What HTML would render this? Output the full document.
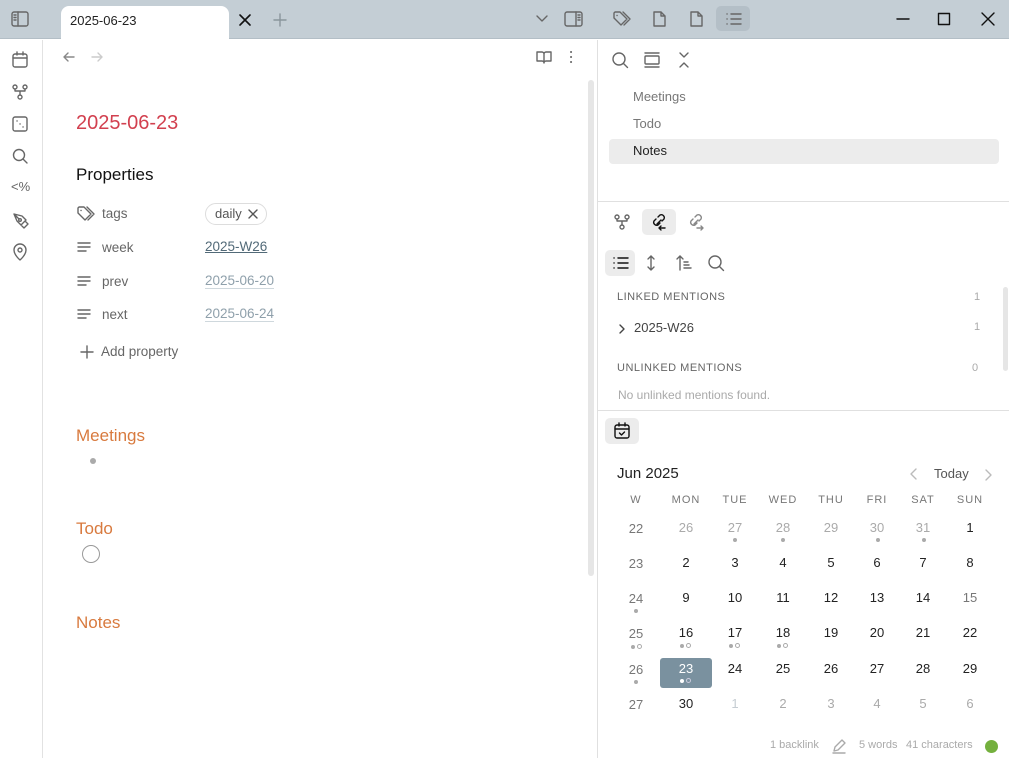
<!DOCTYPE html>
<html><head><meta charset="utf-8"><style>
*{margin:0;padding:0;box-sizing:border-box}
body{width:1009px;height:758px;overflow:hidden;background:#fff;font-family:"Liberation Sans",sans-serif;position:relative;color:#222}
.a{position:absolute;white-space:nowrap;line-height:1}
svg{position:absolute;fill:none;stroke:#666;stroke-width:1.4;stroke-linecap:round;stroke-linejoin:round}
.cal{position:absolute;font-size:13px;text-align:center;width:40px;line-height:1}
.g{color:#aaa}.w{color:#777}
.d{position:absolute;width:4px;height:4px;border-radius:50%;background:#aaa}
.o{position:absolute;width:5px;height:5px;border-radius:50%;border:1px solid #aaa}
</style></head><body>
<!-- top bar -->
<div class="a" style="left:0;top:0;width:1009px;height:39px;background:#c4ced5;border-bottom:1px solid #b3bec6"></div>
<div class="a" style="left:61px;top:6px;width:168px;height:34px;background:#fff;border-radius:8px 8px 0 0"></div>
<div class="a" style="left:70px;top:14px;font-size:13px;color:#222">2025-06-23</div>
<svg style="left:238px;top:13px" width="14" height="14" viewBox="0 0 14 14"><path d="M2 2l10 10M12 2L2 12" stroke="#111" stroke-width="1.6"/></svg>
<svg style="left:272px;top:12px" width="16" height="16" viewBox="0 0 16 16"><path d="M8 2v12M2 8h12" stroke="#8a959c"/></svg>
<svg style="left:11px;top:11px" width="18" height="16" viewBox="0 0 18 16"><rect x="1" y="1" width="16" height="14" rx="2"/><path d="M7 1v14M3 4h2M3 6.5h2M3 9h2"/></svg>
<svg style="left:535px;top:14px" width="14" height="10" viewBox="0 0 14 10"><path d="M2 2l5 5 5-5"/></svg>
<svg style="left:564px;top:11px" width="19" height="16" viewBox="0 0 19 16"><rect x="1" y="1" width="17" height="14" rx="2"/><path d="M12 1v14M14 4h2M14 6.5h2M14 9h2"/></svg>
<!-- right header icons -->
<svg style="left:612px;top:10px" width="20" height="18" viewBox="0 0 20 18"><path d="M2 3v5l7 7 6-6-7-7H3zM5 5.5h.1M11 2l7 7-6 6"/></svg>
<svg style="left:652px;top:10px" width="14" height="18" viewBox="0 0 14 18"><path d="M2 2h7l4 4v10H2zM9 2v4h4"/></svg>
<svg style="left:689px;top:10px" width="14" height="18" viewBox="0 0 14 18"><path d="M2 2h7l4 4v10H2zM9 2v4h4"/></svg>
<div class="a" style="left:716px;top:6px;width:34px;height:25px;background:#b4bfc7;border-radius:5px"></div>
<svg style="left:725px;top:12px" width="18" height="14" viewBox="0 0 18 14"><path d="M2 2h.1M2 7h.1M2 12h.1M6 2h10M6 7h10M6 12h10"/></svg>
<svg style="left:895px;top:12px" width="16" height="14" viewBox="0 0 16 14"><path d="M2 7h12" stroke="#111"/></svg>
<svg style="left:936px;top:11px" width="16" height="16" viewBox="0 0 16 16"><rect x="2.5" y="2.5" width="11" height="11" stroke="#111"/></svg>
<svg style="left:980px;top:11px" width="16" height="16" viewBox="0 0 16 16"><path d="M2 2l12 12M14 2L2 14" stroke="#111"/></svg>
<!-- left ribbon -->
<div class="a" style="left:42px;top:40px;width:1px;height:718px;background:#e2e2e2"></div>
<svg style="left:11px;top:51px" width="18" height="18" viewBox="0 0 18 18"><rect x="2" y="3" width="14" height="13" rx="2"/><path d="M2 7h14M6 1v3M12 1v3"/></svg>
<svg style="left:11px;top:83px" width="18" height="18" viewBox="0 0 18 18"><circle cx="4" cy="4" r="2"/><circle cx="14" cy="4" r="2"/><circle cx="9" cy="14" r="2"/><path d="M4 6v2h10V6M9 8v4"/></svg>
<svg style="left:11px;top:115px" width="18" height="18" viewBox="0 0 18 18"><rect x="2" y="2" width="14" height="14" rx="2"/><path d="M6 6h.1M9 9h.1M12 12h.1"/></svg>
<svg style="left:11px;top:147px" width="18" height="18" viewBox="0 0 18 18"><circle cx="8" cy="8" r="5.5"/><path d="M12 12l4 4"/></svg>
<div class="a" style="left:11px;top:180px;font-size:13px;color:#666">&lt;%</div>
<svg style="left:11px;top:211px" width="18" height="18" viewBox="0 0 18 18"><path d="M3 3l8 2 4 4-5 5-4-4zM3 3l5 5M10 14l3 3 4-4-3-3"/><circle cx="9" cy="9" r="1.3"/></svg>
<svg style="left:11px;top:243px" width="18" height="18" viewBox="0 0 18 18"><path d="M9 17s6-5 6-10A6 6 0 003 7c0 5 6 10 6 10z"/><circle cx="9" cy="7" r="2"/></svg>
<!-- main nav -->
<svg style="left:62px;top:50px" width="14" height="14" viewBox="0 0 14 14"><path d="M12 7H2M6 3L2 7l4 4" stroke="#888"/></svg>
<svg style="left:90px;top:50px" width="14" height="14" viewBox="0 0 14 14"><path d="M2 7h10M8 3l4 4-4 4" stroke="#ccc"/></svg>
<svg style="left:535px;top:49px" width="18" height="16" viewBox="0 0 18 16"><path d="M2 3h5a2 2 0 012 2v9a2 2 0 00-2-2H2zM16 3h-5a2 2 0 00-2 2v9a2 2 0 012-2h5z"/></svg>
<svg style="left:564px;top:49px" width="14" height="16" viewBox="0 0 14 16"><path d="M7 3h.1M7 8h.1M7 13h.1" stroke-width="2"/></svg>
<div class="a" style="left:588px;top:80px;width:6px;height:496px;background:#e6e6e6;border-radius:3px"></div>
<div class="a" style="left:597px;top:40px;width:1px;height:718px;background:#e0e0e0"></div>
<!-- content -->
<div class="a" style="left:76px;top:113px;font-size:20px;color:#d2404f">2025-06-23</div>
<div class="a" style="left:76px;top:166px;font-size:17px;color:#111">Properties</div>
<svg style="left:76px;top:205px" width="20" height="18" viewBox="0 0 20 18"><path d="M2 3v5l7 7 6-6-7-7H3zM5 5.5h.1M11 2l7 7-6 6"/></svg>
<div class="a" style="left:102px;top:207px;font-size:13.5px;color:#666">tags</div>
<div class="a" style="left:205px;top:203px;width:62px;height:22px;border:1px solid #ddd;border-radius:11px"></div>
<div class="a" style="left:215px;top:207px;font-size:13px;color:#555">daily</div>
<svg style="left:247px;top:208px" width="12" height="12" viewBox="0 0 12 12"><path d="M2 2l8 8M10 2l-8 8" stroke="#555"/></svg>
<svg style="left:76px;top:240px" width="16" height="14" viewBox="0 0 16 14"><path d="M2 3h12M2 7h12M2 11h8"/></svg>
<div class="a" style="left:102px;top:241px;font-size:13.5px;color:#666">week</div>
<div class="a" style="left:205px;top:240px;font-size:13.5px;color:#526a78;text-decoration:underline">2025-W26</div>
<svg style="left:76px;top:274px" width="16" height="14" viewBox="0 0 16 14"><path d="M2 3h12M2 7h12M2 11h8"/></svg>
<div class="a" style="left:102px;top:275px;font-size:13.5px;color:#666">prev</div>
<div class="a" style="left:205px;top:274px;font-size:13.5px;color:#8fa0ab;border-bottom:1px solid #cfd8dd">2025-06-20</div>
<svg style="left:76px;top:307px" width="16" height="14" viewBox="0 0 16 14"><path d="M2 3h12M2 7h12M2 11h8"/></svg>
<div class="a" style="left:102px;top:308px;font-size:13.5px;color:#666">next</div>
<div class="a" style="left:205px;top:307px;font-size:13.5px;color:#8fa0ab;border-bottom:1px solid #cfd8dd">2025-06-24</div>
<svg style="left:80px;top:345px" width="14" height="14" viewBox="0 0 14 14"><path d="M7 1v12M1 7h12"/></svg>
<div class="a" style="left:101px;top:345px;font-size:13.5px;color:#666">Add property</div>
<div class="a" style="left:76px;top:427px;font-size:17px;color:#d87a3e">Meetings</div>
<div class="a" style="left:90px;top:458px;width:6px;height:6px;border-radius:50%;background:#aaa"></div>
<div class="a" style="left:76px;top:520px;font-size:17px;color:#d87a3e">Todo</div>
<div class="a" style="left:82px;top:545px;width:18px;height:18px;border-radius:50%;border:1px solid #999"></div>
<div class="a" style="left:76px;top:614px;font-size:17px;color:#d87a3e">Notes</div>
<!-- outline pane -->
<svg style="left:611px;top:51px" width="18" height="18" viewBox="0 0 18 18"><circle cx="8" cy="8" r="6"/><path d="M12.5 12.5l4 4"/></svg>
<svg style="left:643px;top:51px" width="18" height="18" viewBox="0 0 18 18"><path d="M2 2h14M2 16h14"/><rect x="2" y="5" width="14" height="8" rx="1"/></svg>
<svg style="left:676px;top:51px" width="16" height="18" viewBox="0 0 16 18"><path d="M4 2l4 4 4-4M4 16l4-4 4 4"/></svg>
<div class="a" style="left:633px;top:90px;font-size:13px;color:#777">Meetings</div>
<div class="a" style="left:633px;top:117px;font-size:13px;color:#777">Todo</div>
<div class="a" style="left:609px;top:139px;width:390px;height:25px;background:#ececec;border-radius:4px"></div>
<div class="a" style="left:633px;top:144px;font-size:13px;color:#222">Notes</div>
<div class="a" style="left:598px;top:201px;width:411px;height:1px;background:#e0e0e0"></div>
<!-- backlinks pane -->
<svg style="left:613px;top:213px" width="18" height="18" viewBox="0 0 18 18"><circle cx="4" cy="4" r="2"/><circle cx="14" cy="4" r="2"/><circle cx="9" cy="14" r="2"/><path d="M4 6v2h10V6M9 8v4"/></svg>
<div class="a" style="left:642px;top:209px;width:34px;height:26px;background:#ececec;border-radius:5px"></div>
<svg style="left:650px;top:213px" width="18" height="18" viewBox="0 0 18 18"><path d="M8 4l2-2a3 3 0 014 4l-2 2M10 10l-2 2a3 3 0 01-4-4l2-2M7 11l4-4M11 13l-2 2 2 2M9 15h6" stroke="#111"/></svg>
<svg style="left:687px;top:213px" width="18" height="18" viewBox="0 0 18 18"><path d="M8 4l2-2a3 3 0 014 4l-2 2M10 10l-2 2a3 3 0 01-4-4l2-2M7 11l4-4M14 13l2 2-2 2M10 15h6" stroke="#888"/></svg>
<div class="a" style="left:605px;top:250px;width:30px;height:26px;background:#ececec;border-radius:5px"></div>
<svg style="left:612px;top:256px" width="18" height="14" viewBox="0 0 18 14"><path d="M2 2h.1M2 7h.1M2 12h.1M6 2h10M6 7h10M6 12h10" stroke="#111"/></svg>
<svg style="left:644px;top:254px" width="14" height="18" viewBox="0 0 14 18"><path d="M7 2v14M4 5l3-3 3 3M4 13l3 3 3-3"/></svg>
<svg style="left:675px;top:254px" width="18" height="18" viewBox="0 0 18 18"><path d="M5 16V2M2 5l3-3 3 3M9 8h4M9 11h5M9 14h7"/></svg>
<svg style="left:707px;top:254px" width="18" height="18" viewBox="0 0 18 18"><circle cx="8" cy="8" r="6"/><path d="M12.5 12.5l4 4"/></svg>
<div class="a" style="left:617px;top:292px;font-size:11px;color:#666;letter-spacing:.5px">LINKED MENTIONS</div>
<div class="a" style="left:974px;top:292px;font-size:11px;color:#aaa">1</div>
<svg style="left:617px;top:323px" width="10" height="12" viewBox="0 0 10 12"><path d="M3 2l4 4-4 4" stroke="#444"/></svg>
<div class="a" style="left:634px;top:321px;font-size:13px;color:#444">2025-W26</div>
<div class="a" style="left:974px;top:322px;font-size:11px;color:#aaa">1</div>
<div class="a" style="left:617px;top:363px;font-size:11px;color:#666;letter-spacing:.5px">UNLINKED MENTIONS</div>
<div class="a" style="left:972px;top:363px;font-size:11px;color:#aaa">0</div>
<div class="a" style="left:618px;top:389px;font-size:12px;color:#aaa">No unlinked mentions found.</div>
<div class="a" style="left:1003px;top:287px;width:5px;height:84px;background:#e6e6e6;border-radius:3px"></div>
<div class="a" style="left:598px;top:410px;width:411px;height:1px;background:#e0e0e0"></div>
<!-- calendar -->
<div class="a" style="left:605px;top:418px;width:34px;height:26px;background:#ececec;border-radius:5px"></div>
<svg style="left:613px;top:422px" width="18" height="18" viewBox="0 0 18 18"><rect x="2" y="3" width="14" height="13" rx="2" stroke="#111"/><path d="M2 7h14M6 1v3M12 1v3M6.5 11l2 2 3-3" stroke="#111"/></svg>
<div class="a" style="left:617px;top:466px;font-size:15px;color:#222">Jun 2025</div>
<svg style="left:908px;top:467px" width="12" height="14" viewBox="0 0 12 14"><path d="M8 2L3 7l5 5" stroke="#bbb"/></svg>
<div class="a" style="left:934px;top:467px;font-size:13px;color:#555">Today</div>
<svg style="left:982px;top:468px" width="12" height="14" viewBox="0 0 12 14"><path d="M4 2l5 5-5 5" stroke="#bbb"/></svg>
<div class="cal w" style="left:616px;top:495px;font-size:11px;letter-spacing:1px">W</div>
<div class="cal w" style="left:666px;top:495px;font-size:11px;letter-spacing:1px">MON</div>
<div class="cal w" style="left:715px;top:495px;font-size:11px;letter-spacing:1px">TUE</div>
<div class="cal w" style="left:763px;top:495px;font-size:11px;letter-spacing:1px">WED</div>
<div class="cal w" style="left:811px;top:495px;font-size:11px;letter-spacing:1px">THU</div>
<div class="cal w" style="left:857px;top:495px;font-size:11px;letter-spacing:1px">FRI</div>
<div class="cal w" style="left:903px;top:495px;font-size:11px;letter-spacing:1px">SAT</div>
<div class="cal w" style="left:950px;top:495px;font-size:11px;letter-spacing:1px">SUN</div>
<div class="a" style="left:660px;top:658px;width:52px;height:30px;background:#7a919f;border-radius:3px"></div>
<!-- row 1 y 528 -->
<div class="cal w" style="left:616px;top:522px">22</div>
<div class="cal g" style="left:666px;top:521px">26</div>
<div class="cal g" style="left:715px;top:521px">27</div>
<div class="cal g" style="left:763px;top:521px">28</div>
<div class="cal g" style="left:811px;top:521px">29</div>
<div class="cal g" style="left:857px;top:521px">30</div>
<div class="cal g" style="left:903px;top:521px">31</div>
<div class="cal" style="left:950px;top:521px">1</div>
<div class="d" style="left:733px;top:538px"></div><div class="d" style="left:781px;top:538px"></div><div class="d" style="left:876px;top:538px"></div><div class="d" style="left:922px;top:538px"></div>
<!-- row 2 -->
<div class="cal w" style="left:616px;top:557px">23</div>
<div class="cal" style="left:666px;top:556px">2</div>
<div class="cal" style="left:715px;top:556px">3</div>
<div class="cal" style="left:763px;top:556px">4</div>
<div class="cal" style="left:811px;top:556px">5</div>
<div class="cal" style="left:857px;top:556px">6</div>
<div class="cal" style="left:903px;top:556px">7</div>
<div class="cal" style="left:950px;top:556px">8</div>
<!-- row 3 -->
<div class="cal w" style="left:616px;top:592px">24</div>
<div class="cal" style="left:666px;top:591px">9</div>
<div class="cal" style="left:715px;top:591px">10</div>
<div class="cal" style="left:763px;top:591px">11</div>
<div class="cal" style="left:811px;top:591px">12</div>
<div class="cal" style="left:857px;top:591px">13</div>
<div class="cal" style="left:903px;top:591px">14</div>
<div class="cal w" style="left:950px;top:591px">15</div>
<div class="d" style="left:634px;top:609px"></div>
<!-- row 4 -->
<div class="cal w" style="left:616px;top:627px">25</div>
<div class="cal" style="left:666px;top:626px">16</div>
<div class="cal" style="left:715px;top:626px">17</div>
<div class="cal" style="left:763px;top:626px">18</div>
<div class="cal" style="left:811px;top:626px">19</div>
<div class="cal" style="left:857px;top:626px">20</div>
<div class="cal" style="left:903px;top:626px">21</div>
<div class="cal" style="left:950px;top:626px">22</div>
<div class="d" style="left:631px;top:645px"></div><div class="o" style="left:637px;top:644px"></div>
<div class="d" style="left:680px;top:644px"></div><div class="o" style="left:686px;top:643px"></div>
<div class="d" style="left:729px;top:644px"></div><div class="o" style="left:735px;top:643px"></div>
<div class="d" style="left:777px;top:644px"></div><div class="o" style="left:783px;top:643px"></div>
<!-- row 5 -->
<div class="cal w" style="left:616px;top:663px">26</div>
<div class="cal" style="left:666px;top:662px;color:#fff">23</div>
<div class="cal" style="left:715px;top:662px">24</div>
<div class="cal" style="left:763px;top:662px">25</div>
<div class="cal" style="left:811px;top:662px">26</div>
<div class="cal" style="left:857px;top:662px">27</div>
<div class="cal" style="left:903px;top:662px">28</div>
<div class="cal" style="left:950px;top:662px">29</div>
<div class="d" style="left:634px;top:680px"></div>
<div class="d" style="left:680px;top:679px;background:#fff"></div><div class="o" style="left:686px;top:678px;border-color:#ccd"></div>
<!-- row 6 -->
<div class="cal w" style="left:616px;top:698px">27</div>
<div class="cal" style="left:666px;top:697px">30</div>
<div class="cal g" style="left:715px;top:697px;color:#c5ccd2">1</div>
<div class="cal g" style="left:763px;top:697px">2</div>
<div class="cal g" style="left:811px;top:697px">3</div>
<div class="cal g" style="left:857px;top:697px">4</div>
<div class="cal g" style="left:903px;top:697px">5</div>
<div class="cal g" style="left:950px;top:697px">6</div>
<!-- status bar -->
<div class="a" style="left:770px;top:740px;font-size:11px;color:#aaa">1 backlink</div>
<svg style="left:831px;top:738px" width="16" height="16" viewBox="0 0 16 16"><path d="M3 13l1-4 7-7 3 3-7 7zM2 15h12" stroke="#aaa"/></svg>
<div class="a" style="left:859px;top:740px;font-size:11px;color:#aaa">5 words</div>
<div class="a" style="left:906px;top:740px;font-size:11px;color:#aaa">41 characters</div>
<div class="a" style="left:985px;top:740px;width:13px;height:13px;border-radius:50%;background:#74b03e"></div>
</body></html>
